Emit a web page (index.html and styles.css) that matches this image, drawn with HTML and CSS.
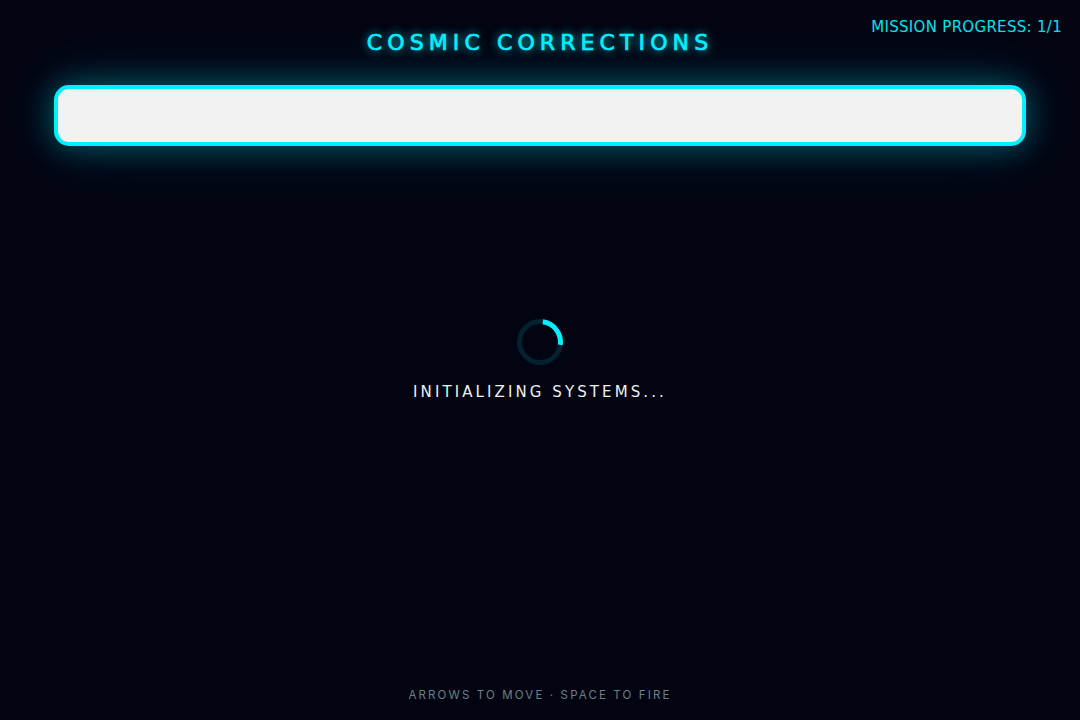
FILE: index.html
```html
<!DOCTYPE html>
<html lang="en">
<head>
    <meta charset="UTF-8">
    <meta name="viewport" content="width=device-width, initial-scale=1.0">
    <title>Cosmic Corrections</title>
    <link rel="stylesheet" href="styles.css">
</head>
<body>
    <div class="progress">MISSION PROGRESS: 1/1</div>
    <h1 class="title">COSMIC CORRECTIONS</h1>
    <div class="sentence-box"></div>
    <main class="loading">
        <div class="spinner"></div>
        <p class="loading-text">INITIALIZING SYSTEMS...</p>
    </main>
    <footer class="controls">ARROWS TO MOVE · SPACE TO FIRE</footer>
</body>
</html>
```

FILE: styles.css
```css
* {
    box-sizing: border-box;
}
html, body {
    height: 100%;
}
body {
    display: flex;
    flex-direction: column;
    align-items: center;
    margin: 0;
    overflow: hidden;
    background-color: #030412;
    font-family: "DejaVu Sans", sans-serif;
}
.progress {
    position: absolute;
    top: 18px;
    right: 18px;
    color: #00e0f0;
    font-size: 15px;
    line-height: 18px;
    letter-spacing: 0.3px;
}
.title {
    margin: 29px 0 0;
    color: #00f0ff;
    font-size: 22px;
    font-weight: 400;
    line-height: 28px;
    letter-spacing: 5.1px;
    text-shadow: 0 0 10px #00f0ff;
    -webkit-text-stroke: 0.7px #00f0ff;
}
.sentence-box {
    width: 972px;
    height: 61px;
    margin-top: 28px;
    flex-shrink: 0;
    background: #f2f2f2;
    border: 4px solid #00f0ff;
    border-radius: 15px;
    box-shadow: 0 0 30px rgba(0, 240, 255, 0.32), 0 0 60px rgba(0, 240, 255, 0.16);
}
.loading {
    display: flex;
    flex-direction: column;
    align-items: center;
    margin-top: 173px;
    flex: 1;
}
.spinner {
    width: 46px;
    height: 46px;
    border: 5px solid rgba(0, 240, 255, 0.13);
    border-top-color: #00f0ff;
    border-radius: 50%;
    transform: rotate(53deg);
}
.loading-text {
    margin: 17px 0 0;
    color: #f0f0f0;
    font-size: 15px;
    line-height: 20px;
    letter-spacing: 3.1px;
}
.controls {
    margin-bottom: 17px;
    color: #6b8088;
    font-family: "Inter", sans-serif;
    font-size: 11.5px;
    line-height: 16px;
    letter-spacing: 2.13px;
}
```
